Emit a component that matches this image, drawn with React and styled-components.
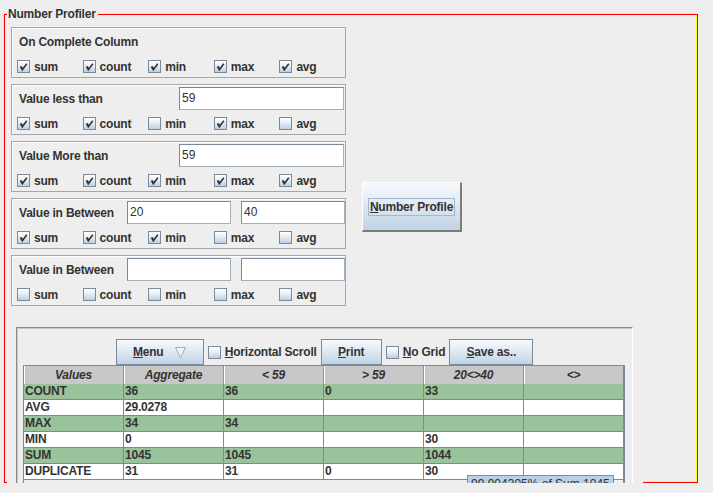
import React from 'react';
import styled, { createGlobalStyle, css } from 'styled-components';

const GlobalStyle = createGlobalStyle`
  html, body {
    margin: 0;
    padding: 0;
    overflow: hidden;
    background: #eeeeee;
  }
  body {
    font-family: "Liberation Sans", Arial, sans-serif;
    font-size: 12px;
    letter-spacing: -0.2px;
    color: #333333;
  }
  #root {
    padding: 14px 0 0 4px;
  }
`;

const oceanGradient = css`
  background: linear-gradient(#f6f9fc 0%, #e3ebf4 40%, #c0d3e6 100%);
`;

const Frame = styled.section`
  position: relative;
  box-sizing: border-box;
  width: 694px;
  height: 469px;
  padding: 12px 0 0 6px;
  border: 1px solid #ff0000;
  box-shadow: -1px -1px 0 #ffff00, inset -1px -1px 0 #ffff00;
`;

const Title = styled.div`
  position: absolute;
  top: -8px;
  left: 2px;
  padding: 0 2px 0 1px;
  font-weight: bold;
  line-height: 14px;
  background: #eeeeee;
`;

const Top = styled.div`
  display: flex;
  align-items: flex-start;
`;

const Options = styled.div`
  display: flex;
  flex-direction: column;
  gap: 6px;
  width: 335px;
`;

const OptionBox = styled.div`
  box-sizing: border-box;
  height: 51px;
  border: 1px solid #a6a6a6;
  box-shadow: inset 1px 1px 0 #ffffff;
  padding: 2px 0 0 5px;
`;

const LabelRow = styled.div`
  display: flex;
  align-items: center;
  height: 23px;
`;

const Label = styled.div`
  box-sizing: border-box;
  width: ${(p) => (p.$width ? `${p.$width}px` : 'auto')};
  padding-left: 2px;
  font-weight: bold;
  white-space: nowrap;
`;

const Field = styled.div`
  box-sizing: border-box;
  width: ${(p) => p.$width}px;
  height: 23px;
  margin-left: ${(p) => p.$gap || 0}px;
  border: 1px solid #7a8a99;
  border-right-color: #a3b1bf;
  border-bottom-color: #a3b1bf;
  background: #ffffff;
  padding: 0 2px;
  line-height: 21px;
  letter-spacing: 0;
`;

const CheckRow = styled.div`
  display: flex;
  margin-top: 7px;
`;

const CheckItem = styled.div`
  display: flex;
  align-items: center;
  gap: 4px;
  width: ${(p) => (p.$width ? `${p.$width}px` : 'auto')};
  height: 13px;
  font-weight: bold;
  white-space: nowrap;
`;

const Box = styled.div`
  box-sizing: border-box;
  display: flex;
  align-items: center;
  justify-content: center;
  width: 13px;
  height: 13px;
  flex: 0 0 13px;
  border: 1px solid #7a8a99;
  background: linear-gradient(#ffffff 0%, #e6eef6 45%, #bccfe3 100%);
`;

const Check = ({ checked, label, width }) => (
  <CheckItem $width={width}>
    <Box>
      {checked && (
        <svg width="11" height="11" viewBox="0 0 11 11">
          <path d="M2.5 5.5 L4.3 8.8 L8.8 2.8" fill="none" stroke="#333" strokeWidth="1.6" />
          <path d="M3.2 5.6 L4.3 7.6" fill="none" stroke="#333" strokeWidth="1.6" />
        </svg>
      )}
    </Box>
    <span>{label}</span>
  </CheckItem>
);

const ProfileButton = styled.div`
  box-sizing: border-box;
  display: flex;
  align-items: center;
  justify-content: center;
  width: 100px;
  height: 50px;
  margin: 155px 0 0 16px;
  border-style: solid;
  border-width: 1px 2px 2px 1px;
  border-color: #ffffff #7c7c7c #7c7c7c #ffffff;
  ${oceanGradient}
  font-weight: bold;
`;

const Focus = styled.span`
  box-sizing: border-box;
  display: block;
  width: 87px;
  height: 18px;
  border: 1px solid #a3b8cc;
  line-height: 16px;
  text-align: center;
  white-space: nowrap;
`;

const Mn = styled.span`
  text-decoration: underline;
`;

const Lower = styled.div`
  position: relative;
  box-sizing: border-box;
  width: 636px;
  height: 200px;
  margin-left: -4px;
  padding: 21px 0 0 9px;
  background: #eeeeee;
`;

const Panel = styled.div`
  box-sizing: border-box;
  display: flex;
  flex-direction: column;
  width: 617px;
  height: 200px;
  padding: 11px 6px 0 6px;
  border-top: 1px solid #8a8a8a;
  border-left: 1px solid #8a8a8a;
  border-right: 1px solid #ffffff;
  box-shadow: inset 1px 1px 0 #c6c6c6;
`;

const Toolbar = styled.div`
  display: flex;
  align-items: center;
  justify-content: center;
  gap: 4px;
  height: 26px;
`;

const ToolButton = styled.div`
  box-sizing: border-box;
  display: flex;
  align-items: center;
  justify-content: center;
  gap: 12px;
  width: ${(p) => p.$width}px;
  height: 26px;
  border: 1px solid #7a8a99;
  ${oceanGradient}
  font-weight: bold;
`;

const Triangle = () => (
  <svg width="11" height="11" viewBox="0 0 11 11">
    <polygon points="0.5,0.5 10.5,0.5 5.5,10.5" fill="#eef2f6" stroke="#a4acb4" strokeWidth="1" />
  </svg>
);

const ScrollPane = styled.div`
  box-sizing: border-box;
  width: 602px;
  flex: 1;
  border-left: 1px solid #7a8a99;
  border-right: 2px solid #7a8a99;
`;

const cols = '100px 100px 100px 100px 100px 99px';

const HeaderRow = styled.div`
  display: grid;
  grid-template-columns: ${cols};
  height: 19px;
  border-top: 1px solid #7a8a99;
  box-sizing: border-box;
  background: #c8c8c8;
`;

const HeaderCell = styled.div`
  box-sizing: border-box;
  border-right: ${(p) => (p.$last ? 'none' : '1px solid #8a96a3')};
  box-shadow: inset 1px 0 0 #ffffff;
  font-weight: bold;
  font-style: italic;
  text-align: center;
  line-height: 18px;
  white-space: nowrap;
`;

const DataRow = styled.div`
  display: grid;
  grid-template-columns: ${cols};
  height: 16px;
  box-sizing: border-box;
  border-bottom: 1px solid #7a8a99;
  background: ${(p) => (p.$green ? '#9bc39b' : '#ffffff')};
`;

const Cell = styled.div`
  box-sizing: border-box;
  border-right: ${(p) => (p.$last ? 'none' : '1px solid #7a8a99')};
  padding-left: 1px;
  font-weight: bold;
  line-height: 15px;
  white-space: nowrap;
`;

const Tip = styled.div`
  position: absolute;
  left: 460px;
  top: 169px;
  box-sizing: border-box;
  height: 18px;
  padding: 0 3px;
  border: 1px solid #6f8fc6;
  background: #b8cfe5;
  line-height: 16px;
  letter-spacing: 0;
  white-space: nowrap;
`;

const options = [
  { title: 'On Complete Column', fields: [], checks: [1, 1, 1, 1, 1] },
  { title: 'Value less than', labelWidth: 162, fields: [{ w: 165, v: '59' }], checks: [1, 1, 0, 1, 0] },
  { title: 'Value More than', labelWidth: 162, fields: [{ w: 165, v: '59' }], checks: [1, 1, 1, 1, 1] },
  { title: 'Value in Between', labelWidth: 110, fields: [{ w: 104, v: '20' }, { w: 104, v: '40', gap: 10 }], checks: [1, 1, 1, 0, 0] },
  { title: 'Value in Between', labelWidth: 110, fields: [{ w: 104, v: '' }, { w: 104, v: '', gap: 10 }], checks: [0, 0, 0, 0, 0] }
];

const checkNames = ['sum', 'count', 'min', 'max', 'avg'];

const headers = ['Values', 'Aggregate', '< 59', '> 59', '20<>40', '<>'];

const rows = [
  ['COUNT', '36', '36', '0', '33', ''],
  ['AVG', '29.0278', '', '', '', ''],
  ['MAX', '34', '34', '', '', ''],
  ['MIN', '0', '', '', '30', ''],
  ['SUM', '1045', '1045', '', '1044', ''],
  ['DUPLICATE', '31', '31', '0', '30', '']
];

export default function App() {
  return (
    <>
      <GlobalStyle />
      <Frame>
        <Title>Number Profiler</Title>
        <Top>
          <Options>
            {options.map((o, i) => (
              <OptionBox key={i}>
                <LabelRow>
                  <Label $width={o.labelWidth}>{o.title}</Label>
                  {o.fields.map((f, j) => (
                    <Field key={j} $width={f.w} $gap={f.gap}>{f.v}</Field>
                  ))}
                </LabelRow>
                <CheckRow>
                  {checkNames.map((n, j) => (
                    <Check key={n} label={n} checked={!!o.checks[j]} width={67} />
                  ))}
                </CheckRow>
              </OptionBox>
            ))}
          </Options>
          <ProfileButton>
            <Focus><Mn>N</Mn>umber Profile</Focus>
          </ProfileButton>
        </Top>
        <Lower>
          <Panel>
            <Toolbar>
              <ToolButton $width={88}><span><Mn>M</Mn>enu</span><Triangle /></ToolButton>
              <CheckItem>
                <Box />
                <span><Mn>H</Mn>orizontal Scroll</span>
              </CheckItem>
              <ToolButton $width={61}><span><Mn>P</Mn>rint</span></ToolButton>
              <CheckItem>
                <Box />
                <span><Mn>N</Mn>o Grid</span>
              </CheckItem>
              <ToolButton $width={84}><span><Mn>S</Mn>ave as..</span></ToolButton>
            </Toolbar>
            <ScrollPane>
              <HeaderRow>
                {headers.map((h, i) => (
                  <HeaderCell key={i} $last={i === headers.length - 1}>{h}</HeaderCell>
                ))}
              </HeaderRow>
              {rows.map((r, i) => (
                <DataRow key={i} $green={i % 2 === 0}>
                  {r.map((c, j) => (
                    <Cell key={j} $last={j === r.length - 1}>{c}</Cell>
                  ))}
                </DataRow>
              ))}
            </ScrollPane>
          </Panel>
          <Tip>99.904305% of Sum 1045</Tip>
        </Lower>
      </Frame>
    </>
  );
}
